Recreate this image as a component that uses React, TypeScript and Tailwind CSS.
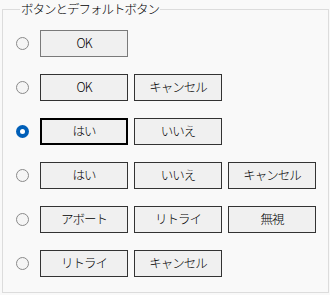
const rows: { labels: string[]; checked?: boolean; muted?: boolean }[] = [
  { labels: ['OK'], muted: true },
  { labels: ['OK', 'キャンセル'] },
  { labels: ['はい', 'いいえ'], checked: true },
  { labels: ['はい', 'いいえ', 'キャンセル'] },
  { labels: ['アボート', 'リトライ', '無視'] },
  { labels: ['リトライ', 'キャンセル'] },
];

function Radio({ checked }: { checked?: boolean }) {
  if (checked) {
    return (
      <span className="flex h-[13px] w-[13px] shrink-0 items-center justify-center rounded-full bg-[#005fb8]">
        <span className="h-[5px] w-[5px] rounded-full bg-white" />
      </span>
    );
  }
  return <span className="h-[13px] w-[13px] shrink-0 rounded-full border border-[#8a8a8a] bg-[#f5f5f5]" />;
}

export default function App() {
  return (
    <div
      className="h-[295px] w-[330px] bg-[#f9f9f9] pl-[2px] font-['Noto_Sans_CJK_JP',sans-serif] text-[12px] font-light text-black font-features-['palt']"
    >
      <fieldset className="h-[293px] w-[327px] border border-[#dcdcdc] pl-[13px] pt-[12px]">
        <legend className="ml-[4px] px-[1px] text-[12.5px] leading-[18px] tracking-[-1px]">
          ボタンとデフォルトボタン
        </legend>
        <div className="flex flex-col gap-[17px]">
          {rows.map((row, i) => (
            <div key={i} className="flex h-[27px] items-center">
              <Radio checked={row.checked} />
              <div className="ml-[11px] flex gap-[6px]">
                {row.labels.map((label, j) => (
                  <button
                    key={j}
                    className={`flex h-[27px] w-[88px] items-center justify-center bg-[#f0f0f0] text-[12.5px] leading-none tracking-[-1px] ${
                      row.checked && j === 0
                        ? 'border-2 border-black'
                        : row.muted
                          ? 'border border-[#7a7a7a]'
                          : 'border border-[#333333]'
                    }`}
                  >
                    {label}
                  </button>
                ))}
              </div>
            </div>
          ))}
        </div>
      </fieldset>
    </div>
  );
}
